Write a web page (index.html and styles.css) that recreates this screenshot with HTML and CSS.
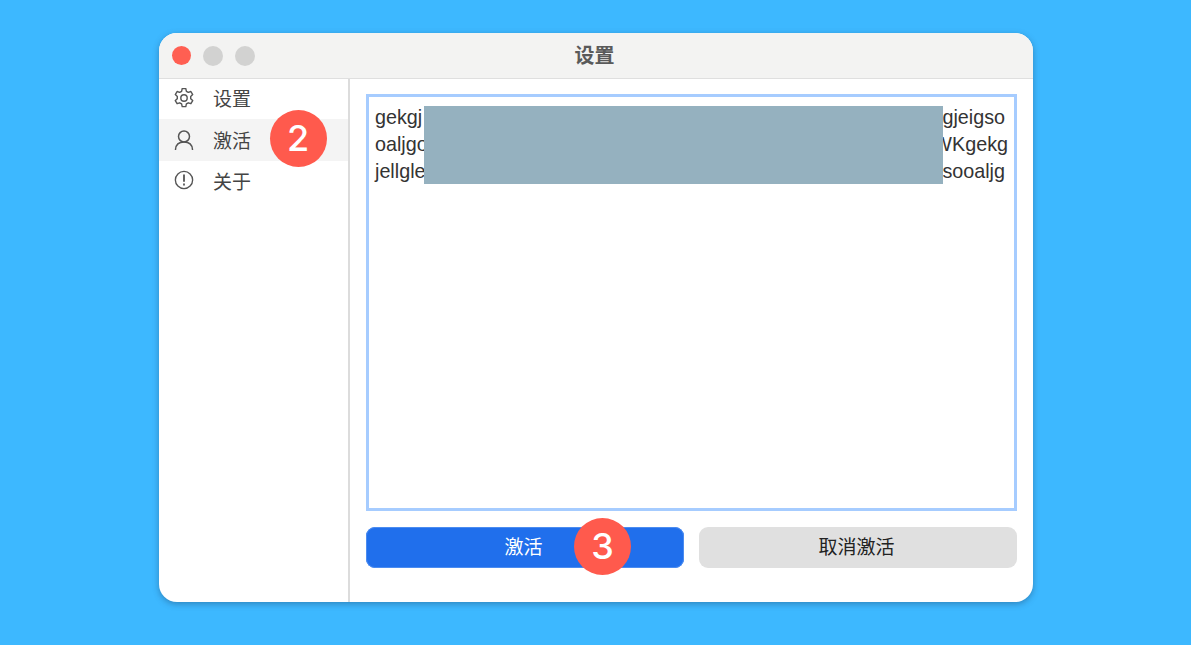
FILE: index.html
```html
<!DOCTYPE html>
<html lang="zh">
<head>
<meta charset="utf-8">
<title>设置</title>
<link rel="stylesheet" href="styles.css">
</head>
<body>
<div class="window">
  <header class="titlebar">
    <div class="lights">
      <span class="light light-close"></span>
      <span class="light"></span>
      <span class="light"></span>
    </div>
    <h1 class="title">设置</h1>
  </header>
  <div class="content">
    <nav class="sidebar">
      <a class="nav-item nav-item-first">
        <svg class="nav-icon" viewBox="2 2 20 20" fill="none" stroke="currentColor" stroke-width="1.4" stroke-linejoin="round"><circle cx="12" cy="12" r="3.2"/><path d="M10.2 2.6h3.600l.6 2.700 1.900 1.100 2.600-.9 1.800 3.100-2 1.900v2.200l2 1.900-1.800 3.100-2.600-.9-1.900 1.100-.6 2.700h-3.600l-.6-2.700-1.900-1.100-2.600.9-1.800-3.100 2-1.900v-2.200l-2-1.900 1.800-3.100 2.600.9 1.900-1.100z"/></svg>
        <span>设置</span>
      </a>
      <a class="nav-item nav-item-active">
        <svg class="nav-icon" viewBox="2 2 20 20" fill="none" stroke="currentColor" stroke-width="1.5" stroke-linecap="round"><circle cx="12" cy="8.500" r="5.500"/><path d="M3.500 21.500c.3-4.600 3-7.500 8.500-7.500s8.200 2.900 8.500 7.500"/></svg>
        <span>激活</span>
      </a>
      <a class="nav-item nav-item-last">
        <svg class="nav-icon" viewBox="1 1 22 22" fill="none" stroke="currentColor" stroke-width="1.500" stroke-linecap="round"><circle cx="12" cy="12" r="9.500"/><path d="M12 6.800v6.400M12 16.600v.6" stroke-width="2"/></svg>
        <span>关于</span>
      </a>
      <span class="step step-nav">2</span>
    </nav>
    <main class="main">
      <div class="code-box">
        <p class="code-line"><span>gekgj</span><span>gjeigso</span></p>
        <p class="code-line code-line-wide"><span>oaljgo</span><span>WKgekg</span></p>
        <p class="code-line"><span>jellgle</span><span>sooaljg</span></p>
        <div class="redaction"></div>
      </div>
      <div class="actions">
        <button class="btn btn-primary">激活<span class="step step-btn">3</span></button>
        <button class="btn btn-secondary">取消激活</button>
      </div>
    </main>
  </div>
</div>
</body>
</html>
```

FILE: styles.css
```css
* { box-sizing: border-box; }
html, body { height: 100%; }
body {
  margin: 0;
  padding: 33px 158px 43px 159px;
  background: #3db8ff;
  overflow: hidden;
  font-family: "Liberation Sans", "Noto Sans CJK SC", sans-serif;
  color: #333;
}
.window {
  height: 569px;
  display: flex;
  flex-direction: column;
  background: #fff;
  border-radius: 18px;
  overflow: hidden;
  box-shadow: 0 2px 6px rgba(30, 70, 110, .45);
}
.titlebar {
  height: 46px;
  flex: none;
  display: flex;
  align-items: center;
  justify-content: center;
  position: relative;
  padding-right: 3px;
  background: #f3f3f2;
  border-bottom: 1px solid #dfdfdf;
}
.lights {
  position: absolute;
  left: 13px;
  top: 13px;
  display: flex;
  gap: 12px;
}
.light {
  width: 20px;
  height: 20px;
  border-radius: 50%;
  background: #d2d2d1;
}
.light-close {
  width: 19px;
  height: 19px;
  background: #ff5f52;
}
.title {
  margin: 0;
  font-size: 20px;
  font-weight: 700;
  line-height: 26px;
  color: #5a5a5a;
}
.content {
  flex: 1;
  display: flex;
  min-height: 0;
}
.sidebar {
  width: 191px;
  flex: none;
  position: relative;
  border-right: 2px solid #dcdcdc;
}
.nav-item {
  height: 42px;
  display: flex;
  align-items: center;
  gap: 19px;
  padding: 0 0 1px 15px;
  font-size: 19px;
  color: #444;
}
.nav-item-first {
  height: 40px;
  padding-bottom: 3px;
}
.nav-item-last { padding-bottom: 4px; }
.nav-item-active { background: #f4f4f4; }
.nav-icon {
  width: 20px;
  height: 20px;
  flex: none;
  color: #555;
}
.step {
  position: absolute;
  width: 57px;
  height: 57px;
  border-radius: 50%;
  background: #ff5a4d;
  color: #fff;
  font-family: "Inter", "Liberation Sans", sans-serif;
  font-size: 36px;
  font-weight: 500;
  line-height: 57px;
  text-align: center;
}
.step-nav { left: 110.500px; top: 30.500px; }
.step-btn { left: 208px; top: -9px; }
.main {
  flex: 1;
  min-width: 0;
  padding: 15px 16px 34px 16px;
  display: flex;
  flex-direction: column;
  gap: 16px;
}
.code-box {
  flex: 1;
  position: relative;
  border: 3px solid #a6ccff;
  padding: 7px 9px 6px 6px;
  background: #fff;
  font-size: 19.750px;
  line-height: 27px;
  color: #333;
}
.code-line {
  margin: 0;
  display: flex;
  justify-content: space-between;
}
.code-line-wide { margin-right: -3px; }
.redaction {
  position: absolute;
  left: 55px;
  top: 9px;
  width: 519px;
  height: 78px;
  background: #95b1bf;
}
.actions {
  flex: none;
  display: grid;
  grid-template-columns: 318px 318px;
  justify-content: space-between;
}
.btn {
  position: relative;
  height: 41px;
  border: 0;
  border-radius: 9px;
  font: inherit;
  font-size: 19px;
  padding: 0 3px 4px 0;
}
.btn-primary { background: #206fec; color: #fff; box-shadow: inset 0 0 0 1px #4c8cf0; }
.btn-secondary { background: #e0e0e0; color: #222; }
```
